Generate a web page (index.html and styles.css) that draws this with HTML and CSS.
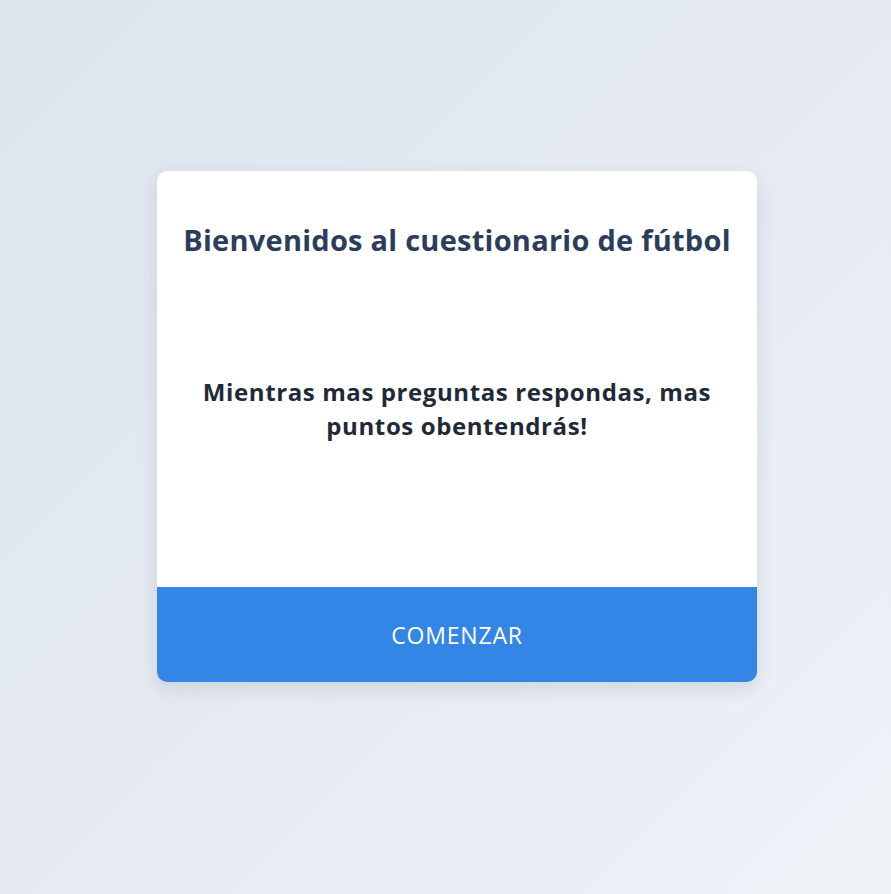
FILE: index.html
```html
<!DOCTYPE html>
<html lang="es">
<head>
<meta charset="utf-8">
<title>Cuestionario de fútbol</title>
<link rel="stylesheet" href="styles.css">
</head>
<body>
<main class="page">
  <section class="card">
    <div class="card-body">
      <h1 class="title">Bienvenidos al cuestionario de fútbol</h1>
      <p class="lead">Mientras mas preguntas respondas, mas puntos obentendrás!</p>
    </div>
    <button class="start" type="button">COMENZAR</button>
  </section>
</main>
</body>
</html>
```
FILE: styles.css
```css
* { box-sizing: border-box; }
html, body { margin: 0; height: 100%; }
body {
  background: linear-gradient(135deg, #dde4ee 0%, #e5eaf2 50%, #eff2f7 100%);
  font-family: "Open Sans", "Liberation Sans", sans-serif;
}
.page {
  display: flex;
  justify-content: center;
  padding-top: 171px;
  padding-left: 23px;
}
.card {
  width: 600px;
  background: #fff;
  border-radius: 10px;
  overflow: hidden;
  box-shadow: 0 8px 18px rgba(40, 55, 80, 0.12);
  display: flex;
  flex-direction: column;
}
.card-body {
  height: 416px;
  padding: 50px 10px 0;
  text-align: center;
}
.title {
  margin: 0;
  font-size: 29px;
  line-height: 38px;
  font-weight: 700;
  color: #2c3d5b;
  letter-spacing: 0.25px;
}
.lead {
  margin: 116px auto 0;
  width: 550px;
  font-size: 24px;
  line-height: 34px;
  font-weight: 700;
  color: #1f2937;
  letter-spacing: 0.6px;
}
.start {
  height: 95px;
  border: 0;
  background: #3486e6;
  color: #fff;
  font-family: "Open Sans", "Liberation Sans", sans-serif;
  font-size: 23px;
  letter-spacing: 0.8px;
  cursor: pointer;
}
```
